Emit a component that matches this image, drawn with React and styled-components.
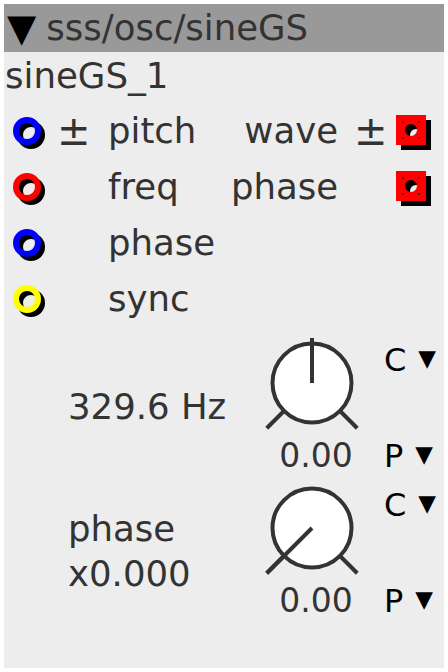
import styled, { createGlobalStyle } from 'styled-components'

const GlobalStyle = createGlobalStyle`
  body {
    margin: 0;
    background: #ffffff;
    font-family: "DejaVu Sans", sans-serif;
  }
`

const inlets = [
  { color: '#0000ff', bipolar: true, name: 'pitch' },
  { color: '#ff0000', bipolar: false, name: 'freq' },
  { color: '#0000ff', bipolar: false, name: 'phase' },
  { color: '#ffff00', bipolar: false, name: 'sync' },
]

const outlets = [
  { name: 'wave', bipolar: true },
  { name: 'phase', bipolar: false },
]

const params = [
  { label: ['329.6 Hz'], value: '0.00', pos: 0.5 },
  { label: ['phase', 'x0.000'], value: '0.00', pos: 0 },
]

const Ring = ({ color }) => (
  <RingSvg width="32" height="32" viewBox="0 0 32 32">
    <circle cx="18" cy="18" r="11" fill="none" stroke="#000" strokeWidth="6" />
    <circle cx="14" cy="14" r="11" fill="none" stroke={color} strokeWidth="6" />
  </RingSvg>
)

const holed = (x, y) =>
  `M${x} ${y}h30v30h-30Z M${x + 15} ${y + 9}a6 6 0 1 0 0 12a6 6 0 1 0 0 -12Z`

const Outlet = () => (
  <OutletSvg width="36" height="36" viewBox="0 0 36 36">
    <path d={holed(5, 5)} fill="#000" fillRule="evenodd" />
    <path d={holed(0, 0)} fill="#ff0000" fillRule="evenodd" />
    {[[7, 7], [23, 7], [7, 23], [23, 23]].map(([x, y]) => (
      <circle key={x + '-' + y} cx={x} cy={y} r="1" fill="#600" />
    ))}
  </OutletSvg>
)

const polar = (cx, cy, r, deg) => {
  const a = (deg * Math.PI) / 180
  return [cx + r * Math.sin(a), cy - r * Math.cos(a)]
}

const Knob = ({ pos }) => {
  const cx = 50
  const cy = 45
  const angle = -135 + 270 * pos
  const [lx1, ly1] = polar(cx, cy, 40, -135)
  const [lx2, ly2] = polar(cx, cy, 64, -135)
  const [rx1, ry1] = polar(cx, cy, 40, 135)
  const [rx2, ry2] = polar(cx, cy, 64, 135)
  const [ix, iy] = polar(cx, cy, 64, angle)
  return (
    <KnobSvg width="100" height="94" viewBox="0 0 100 94">
      <circle cx={cx} cy={cy} r="39.5" fill="#fff" stroke="#333" strokeWidth="4" />
      <line x1={lx1} y1={ly1} x2={lx2} y2={ly2} stroke="#333" strokeWidth="4" />
      <line x1={rx1} y1={ry1} x2={rx2} y2={ry2} stroke="#333" strokeWidth="4" />
      <line x1={cx} y1={cy} x2={ix} y2={iy} stroke="#333" strokeWidth="4" />
    </KnobSvg>
  )
}

const App = () => {
  return (
    <Page>
      <GlobalStyle />
      <Panel>
        <Header>
          <Collapse>▼</Collapse>
          <span>sss/osc/sineGS</span>
        </Header>
        <InstanceName>sineGS_1</InstanceName>
        <Ports>
          <Column>
            {inlets.map((inlet) => (
              <InletRow key={inlet.name}>
                <Ring color={inlet.color} />
                <PlusMinus>{inlet.bipolar ? '±' : ''}</PlusMinus>
                <PortLabel>{inlet.name}</PortLabel>
              </InletRow>
            ))}
          </Column>
          <Column>
            {outlets.map((outlet) => (
              <OutletRow key={outlet.name}>
                <PortLabel>{outlet.name}</PortLabel>
                <OutletSign>{outlet.bipolar ? '±' : ''}</OutletSign>
                <Outlet />
              </OutletRow>
            ))}
          </Column>
        </Ports>
        {params.map((p, i) => (
          <ParamRow key={i}>
            <ParamLabel>
              {p.label.map((line) => (
                <div key={line}>{line}</div>
              ))}
            </ParamLabel>
            <KnobColumn>
              <Knob pos={p.pos} />
              <Value>{p.value}</Value>
            </KnobColumn>
            <MenuColumn>
              <Menu>
                C<SmallArrow>▼</SmallArrow>
              </Menu>
              <Menu>
                P<SmallArrow>▼</SmallArrow>
              </Menu>
            </MenuColumn>
          </ParamRow>
        ))}
      </Panel>
    </Page>
  )
}

const Page = styled.div`
  padding: 4px;
`

const Panel = styled.div`
  width: 440px;
  height: 664px;
  background: #ededed;
  color: #333333;
  display: flex;
  flex-direction: column;
  overflow: hidden;
`

const Header = styled.div`
  height: 48px;
  background: #999999;
  display: flex;
  align-items: center;
  padding-left: 3px;
  font-size: 35.5px;
  line-height: 48px;
  white-space: nowrap;
`

const Collapse = styled.span`
  color: #000;
  font-size: 38px;
  margin-right: 10px;
`

const InstanceName = styled.div`
  font-size: 35.6px;
  line-height: 48px;
  padding-left: 1px;
  margin-bottom: 3px;
`

const Ports = styled.div`
  display: flex;
  justify-content: space-between;
`

const Column = styled.div`
  display: flex;
  flex-direction: column;
`

const InletRow = styled.div`
  height: 56px;
  display: flex;
  align-items: center;
  padding-left: 9px;
`

const RingSvg = styled.svg`
  flex: none;
  margin-top: 4px;
`

const PlusMinus = styled.span`
  width: 63px;
  padding-left: 12px;
  box-sizing: border-box;
  font-size: 40px;
`

const PortLabel = styled.span`
  font-size: 35.5px;
  line-height: 56px;
`

const OutletRow = styled.div`
  height: 56px;
  display: flex;
  align-items: center;
  justify-content: flex-end;
  padding-right: 12px;
`

const OutletSign = styled.span`
  width: 58px;
  padding-left: 16px;
  box-sizing: border-box;
  font-size: 40px;
`

const OutletSvg = styled.svg`
  flex: none;
  margin-top: 4px;
`

const ParamRow = styled.div`
  display: grid;
  grid-template-columns: 194px 100px 1fr;
  padding-left: 64px;
  margin-top: 11px;
  margin-bottom: -2px;
`

const ParamLabel = styled.div`
  align-self: center;
  font-size: 35.5px;
  line-height: 45px;
`

const KnobColumn = styled.div`
  display: flex;
  flex-direction: column;
  align-items: center;
`

const KnobSvg = styled.svg`
  display: block;
`

const Value = styled.div`
  font-size: 33px;
  line-height: 36px;
  margin-top: 6px;
  margin-left: 8px;
`

const MenuColumn = styled.div`
  display: flex;
  flex-direction: column;
  justify-content: space-between;
  padding: 4px 0 0 22px;
`

const Menu = styled.div`
  display: flex;
  align-items: flex-start;
  color: #000;
  font-size: 32px;
  line-height: 36px;
`

const SmallArrow = styled.span`
  font-size: 23px;
  line-height: 23px;
  margin-left: 12px;
  margin-top: 5px;
`

export default App
